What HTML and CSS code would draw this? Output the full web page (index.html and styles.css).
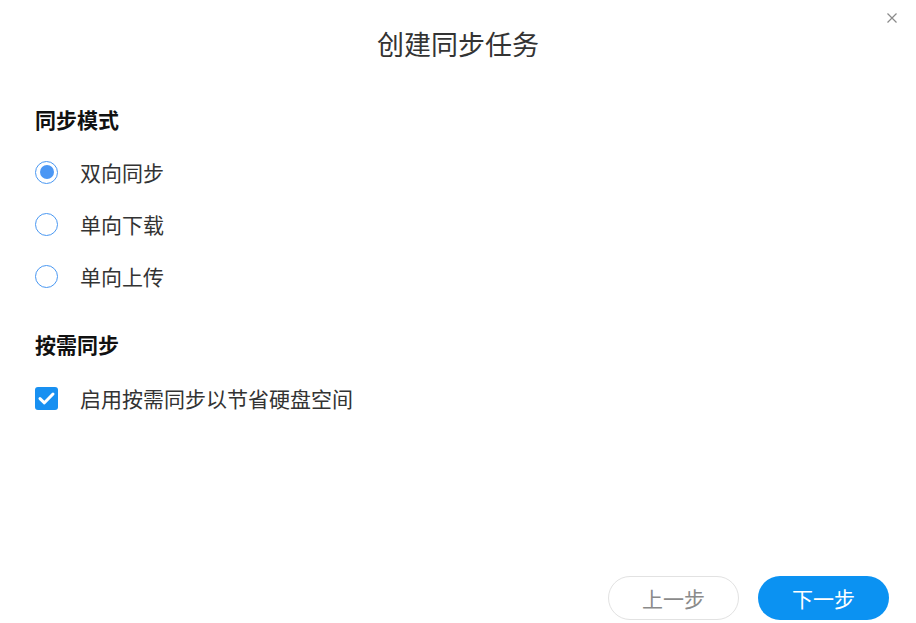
FILE: index.html
```html
<!DOCTYPE html>
<html lang="zh-CN">
  <head>
    <meta charset="UTF-8" />
    <meta name="viewport" content="width=device-width, initial-scale=1.0" />
    <title>创建同步任务</title>
    <link rel="stylesheet" href="styles.css">
  </head>
  <body>
    <div class="dialog">
      <button class="close-btn" aria-label="关闭">
        <svg width="12" height="12" viewBox="0 0 12 12">
          <path d="M1.5 1.5 L10.5 10.5 M10.5 1.5 L1.5 10.5" stroke="#8a8a8a" stroke-width="1.2" fill="none" />
        </svg>
      </button>
      <h2 class="dialog-title">创建同步任务</h2>

      <div class="dialog-body">
        <h3 class="section-title">同步模式</h3>
        <label class="option">
          <span class="radio checked"></span>
          <span class="option-text">双向同步</span>
        </label>
        <label class="option">
          <span class="radio"></span>
          <span class="option-text">单向下载</span>
        </label>
        <label class="option">
          <span class="radio"></span>
          <span class="option-text">单向上传</span>
        </label>

        <h3 class="section-title section-gap">按需同步</h3>
        <label class="option">
          <span class="checkbox">
            <svg width="19" height="19" viewBox="0 0 19 19">
              <path d="M3 9.6 L7.4 13.8 L16 5" stroke="#fff" stroke-width="3" fill="none" stroke-linecap="round" stroke-linejoin="round" />
            </svg>
          </span>
          <span class="option-text">启用按需同步以节省硬盘空间</span>
        </label>
      </div>

      <div class="dialog-footer">
        <button class="btn btn-default">上一步</button>
        <button class="btn btn-primary">下一步</button>
      </div>
    </div>
  </body>
</html>
```

FILE: styles.css
```css
body {
  margin: 0;
  font-family: "Noto Sans CJK SC", "Noto Sans", sans-serif;
  background: #fff;
  color: #333;
}
.dialog {
  position: relative;
  height: 623px;
  display: flex;
  flex-direction: column;
  box-sizing: border-box;
}
.close-btn {
  position: absolute;
  top: 12px;
  right: 18px;
  width: 12px;
  height: 12px;
  padding: 0;
  border: none;
  background: none;
  cursor: pointer;
  display: flex;
}
.dialog-title {
  margin: 26px 0 0;
  height: 36px;
  line-height: 36px;
  text-align: center;
  font-size: 27px;
  font-weight: normal;
  color: #333;
}
.dialog-body {
  padding: 43px 35px 0;
}
.section-title {
  margin: 0 0 13px;
  height: 28px;
  line-height: 28px;
  font-size: 21px;
  font-weight: bold;
  color: #111;
}
.section-gap {
  margin-top: 28px;
  margin-bottom: 14px;
}
.option {
  display: flex;
  align-items: center;
  height: 52px;
  cursor: pointer;
}
.option-text {
  margin-left: 22px;
  font-size: 21px;
  color: #333;
}
.radio {
  width: 23px;
  height: 23px;
  box-sizing: border-box;
  border: 1.2px solid #4a98f2;
  border-radius: 50%;
  display: flex;
  align-items: center;
  justify-content: center;
}
.radio.checked::after {
  content: "";
  width: 14px;
  height: 14px;
  border-radius: 50%;
  background: #4b97f4;
}
.checkbox {
  width: 23px;
  height: 23px;
  border-radius: 3px;
  background: #1890f1;
  display: flex;
  align-items: center;
  justify-content: center;
}
.dialog-footer {
  margin-top: auto;
  display: flex;
  justify-content: flex-end;
  gap: 19px;
  padding: 0 27px 3px 0;
}
.btn {
  width: 131px;
  height: 44px;
  border-radius: 22px;
  font-family: inherit;
  font-size: 21px;
  cursor: pointer;
}
.btn-default {
  background: #fff;
  border: 1px solid #e2e2e2;
  color: #8a8a8a;
}
.btn-primary {
  background: #0b92f2;
  border: none;
  color: #fff;
}
```
